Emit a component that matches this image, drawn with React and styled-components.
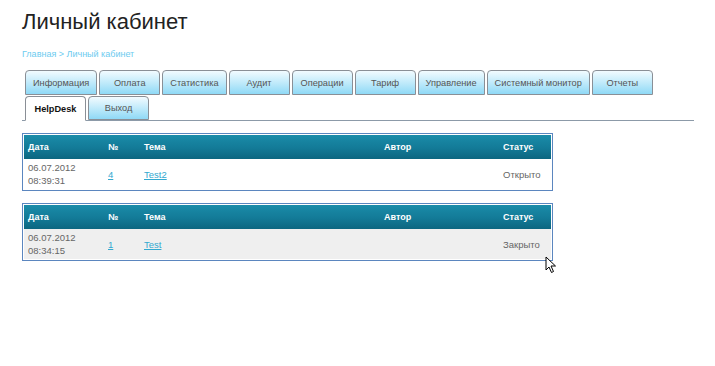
import React from "react";
import styled, { createGlobalStyle } from "styled-components";

const Global = createGlobalStyle`
  html, body { margin: 0; padding: 0; background: #fff; }
  body { font-family: "Liberation Sans", Arial, sans-serif; }
`;

const Page = styled.div`
  position: relative;
  box-sizing: border-box;
  min-height: 366px;
  padding: 9px 21px 0 22px;
`;

const Title = styled.h1`
  margin: 0;
  font-size: 22px;
  font-weight: normal;
  color: #222;
  line-height: 25px;
`;

const Breadcrumb = styled.div`
  margin-top: 15px;
  font-size: 9px;
  line-height: 11px;
  color: #6ccbef;
`;

const TabBar = styled.div`
  margin-top: 10px;
  display: flex;
  flex-direction: column;
  gap: 1px;
  padding-left: 3px;
  border-bottom: 1px solid #8c9aa8;
`;

const TabRow = styled.div`
  display: flex;
  gap: 2px;
`;

const Tab = styled.div`
  box-sizing: border-box;
  min-width: 61px;
  height: ${(p) => (p.$short ? "24px" : "25px")};
  padding: 0 7px;
  display: flex;
  align-items: center;
  justify-content: center;
  font-size: 9.2px;
  white-space: nowrap;
  border: 1px solid #8a8f96;
  border-radius: 4px 4px 0 0;
  color: ${(p) => (p.$active ? "#111" : "#555")};
  font-weight: ${(p) => (p.$active ? "bold" : "normal")};
  background: ${(p) =>
    p.$active ? "#fff" : "linear-gradient(to bottom, #f2fbff 0%, #c6ecfb 45%, #8fd9f6 100%)"};
  ${(p) => (p.$active ? "border-bottom: 1px solid #fff; margin-bottom: -1px; height: 25px;" : "")}
`;

const Table = styled.div`
  box-sizing: border-box;
  width: 531px;
  margin-top: ${(p) => p.$mt}px;
  border: 1px solid #5b86bf;
  padding: 1px;
`;

const Row = styled.div`
  display: grid;
  grid-template-columns: 80px 36px 240px 119px 1fr;
  align-items: center;
`;

const HeadRow = styled(Row)`
  height: 24px;
  background: linear-gradient(to bottom, #1a8ca9 0%, #137a97 55%, #0c6680 100%);
`;

const BodyRow = styled(Row)`
  height: 30px;
  background: ${(p) => (p.$alt ? "#efefef" : "#fff")};
`;

const HCell = styled.div`
  padding-left: 4px;
  color: #fff;
  font-weight: bold;
  font-size: 9px;
`;

const Cell = styled.div`
  padding-left: 4px;
  color: #666;
  font-size: 9.5px;
  line-height: 13px;
`;

const Link = styled.a`
  color: #33a9d0;
  text-decoration: underline;
  font-size: 9.5px;
`;

const Cursor = styled.svg`
  position: absolute;
  left: 545px;
  top: 256px;
  width: 12px;
  height: 18px;
  display: block;
  z-index: 10;
  overflow: visible;
`;

const tabs1 = ["Информация", "Оплата", "Статистика", "Аудит", "Операции", "Тариф", "Управление", "Системный монитор", "Отчеты"];

const tickets = [
  { date: "06.07.2012", time: "08:39:31", num: "4", topic: "Test2", status: "Открыто", alt: false, mt: 12 },
  { date: "06.07.2012", time: "08:34:15", num: "1", topic: "Test", status: "Закрыто", alt: true, mt: 12 },
];

export default function App() {
  return (
    <>
      <Global />
      <Page>
        <Title>Личный кабинет</Title>
        <Breadcrumb>Главная &gt; Личный кабинет</Breadcrumb>
        <TabBar>
          <TabRow>
            {tabs1.map((t) => (
              <Tab key={t}>{t}</Tab>
            ))}
          </TabRow>
          <TabRow>
            <Tab $active>HelpDesk</Tab>
            <Tab $short>Выход</Tab>
          </TabRow>
        </TabBar>
        {tickets.map((t, i) => (
          <Table key={i} $mt={t.mt}>
            <HeadRow>
              <HCell>Дата</HCell>
              <HCell>№</HCell>
              <HCell>Тема</HCell>
              <HCell>Автор</HCell>
              <HCell>Статус</HCell>
            </HeadRow>
            <BodyRow $alt={t.alt}>
              <Cell>
                {t.date}
                <br />
                {t.time}
              </Cell>
              <Cell>
                <Link href="#">{t.num}</Link>
              </Cell>
              <Cell>
                <Link href="#">{t.topic}</Link>
              </Cell>
              <Cell />
              <Cell>{t.status}</Cell>
            </BodyRow>
          </Table>
        ))}
        <Cursor viewBox="0 0 12 18">
          <path d="M1 1 L1 14 L4 11 L6.5 16.5 L8.5 15.5 L6 10 L10.5 10 Z" fill="#ffffff" stroke="#000000" strokeWidth="1" strokeLinejoin="round" />
        </Cursor>
      </Page>
    </>
  );
}
